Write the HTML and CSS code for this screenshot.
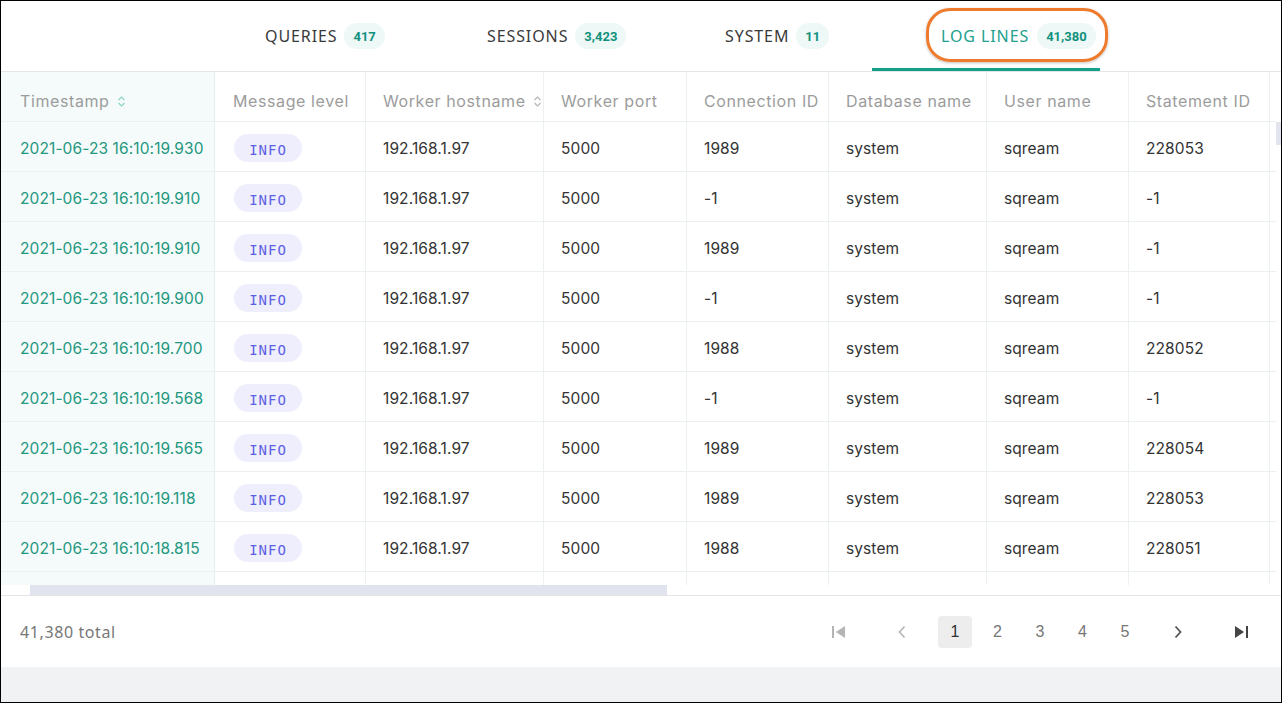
FILE: index.html
```html
<!DOCTYPE html>
<html lang="en">
<head>
<meta charset="utf-8">
<title>Log lines</title>
<link rel="stylesheet" href="styles.css">
</head>
<body>
<div class="frame">
  <nav class="tabs">
    <div class="tab tab-q"><span class="tab-label">QUERIES</span><span class="count">417</span></div>
    <div class="tab tab-s"><span class="tab-label">SESSIONS</span><span class="count">3,423</span></div>
    <div class="tab tab-y"><span class="tab-label">SYSTEM</span><span class="count">11</span></div>
    <div class="tab tab-l active"><span class="tab-label">LOG LINES</span><span class="count">41,380</span><span class="highlight"></span></div>
  </nav>

  <div class="grid-area">
    <div class="table-wrap">
      <table class="log">
        <colgroup>
          <col class="c-ts"><col class="c-lvl"><col class="c-host"><col class="c-port"><col class="c-conn"><col class="c-db"><col class="c-user"><col class="c-stmt"><col class="c-more">
        </colgroup>
        <thead>
          <tr>
            <th class="ts">Timestamp <svg class="sort" width="9" height="13" viewBox="0 0 9 13"><path d="M1.5 5 L4.5 2 L7.5 5 M1.5 8 L4.5 11 L7.5 8" fill="none" stroke="currentColor" stroke-width="1.2"/></svg></th>
            <th>Message level</th>
            <th><span class="nowrap">Worker hostname <svg class="sort grey" width="9" height="13" viewBox="0 0 9 13"><path d="M1.5 5 L4.5 2 L7.5 5 M1.5 8 L4.5 11 L7.5 8" fill="none" stroke="currentColor" stroke-width="1.2"/></svg></span></th>
            <th>Worker port</th>
            <th>Connection ID</th>
            <th>Database name</th>
            <th>User name</th>
            <th>Statement ID</th>
            <th></th>
          </tr>
        </thead>
        <tbody>
          <tr><td class="ts">2021-06-23 16:10:19.930</td><td><span class="lvl">INFO</span></td><td>192.168.1.97</td><td>5000</td><td>1989</td><td>system</td><td>sqream</td><td>228053</td><td></td></tr>
          <tr><td class="ts">2021-06-23 16:10:19.910</td><td><span class="lvl">INFO</span></td><td>192.168.1.97</td><td>5000</td><td>-1</td><td>system</td><td>sqream</td><td>-1</td><td></td></tr>
          <tr><td class="ts">2021-06-23 16:10:19.910</td><td><span class="lvl">INFO</span></td><td>192.168.1.97</td><td>5000</td><td>1989</td><td>system</td><td>sqream</td><td>-1</td><td></td></tr>
          <tr><td class="ts">2021-06-23 16:10:19.900</td><td><span class="lvl">INFO</span></td><td>192.168.1.97</td><td>5000</td><td>-1</td><td>system</td><td>sqream</td><td>-1</td><td></td></tr>
          <tr><td class="ts">2021-06-23 16:10:19.700</td><td><span class="lvl">INFO</span></td><td>192.168.1.97</td><td>5000</td><td>1988</td><td>system</td><td>sqream</td><td>228052</td><td></td></tr>
          <tr><td class="ts">2021-06-23 16:10:19.568</td><td><span class="lvl">INFO</span></td><td>192.168.1.97</td><td>5000</td><td>-1</td><td>system</td><td>sqream</td><td>-1</td><td></td></tr>
          <tr><td class="ts">2021-06-23 16:10:19.565</td><td><span class="lvl">INFO</span></td><td>192.168.1.97</td><td>5000</td><td>1989</td><td>system</td><td>sqream</td><td>228054</td><td></td></tr>
          <tr><td class="ts">2021-06-23 16:10:19.118</td><td><span class="lvl">INFO</span></td><td>192.168.1.97</td><td>5000</td><td>1989</td><td>system</td><td>sqream</td><td>228053</td><td></td></tr>
          <tr><td class="ts">2021-06-23 16:10:18.815</td><td><span class="lvl">INFO</span></td><td>192.168.1.97</td><td>5000</td><td>1988</td><td>system</td><td>sqream</td><td>228051</td><td></td></tr>
          <tr class="partial"><td class="ts"></td><td></td><td></td><td></td><td></td><td></td><td></td><td></td><td></td></tr>
        </tbody>
      </table>
    </div>
    <div class="vscroll"><div class="vthumb"></div></div>
  </div>
  <div class="hscroll"><div class="hthumb"></div></div>

  <footer class="footer">
    <span class="total">41,380 total</span>
    <div class="pager">
      <span class="pg-btn first disabled"><svg width="16" height="14" viewBox="0 0 16 14"><rect x="1" y="1" width="2" height="12" fill="currentColor"/><path d="M14 1 L14 13 L5 7 Z" fill="currentColor"/></svg></span>
      <span class="pg-btn prev disabled"><svg width="10" height="14" viewBox="0 0 10 14"><path d="M7.5 1.5 L2.5 7 L7.5 12.5" fill="none" stroke="currentColor" stroke-width="1.6"/></svg></span>
      <span class="pg-num current">1</span>
      <span class="pg-num">2</span>
      <span class="pg-num">3</span>
      <span class="pg-num">4</span>
      <span class="pg-num">5</span>
      <span class="pg-btn next"><svg width="10" height="14" viewBox="0 0 10 14"><path d="M2.5 1.5 L7.5 7 L2.5 12.5" fill="none" stroke="currentColor" stroke-width="1.8"/></svg></span>
      <span class="pg-btn last"><svg width="16" height="14" viewBox="0 0 16 14"><path d="M2 1 L2 13 L11 7 Z" fill="currentColor"/><rect x="13" y="1" width="2" height="12" fill="currentColor"/></svg></span>
    </div>
  </footer>
  <div class="bottom-band"></div>
</div>
</body>
</html>
```

FILE: styles.css
```css
* { box-sizing: border-box; }
html, body { margin: 0; padding: 0; background: #ffffff; }
body { font-family: "Inter", "Noto Sans", sans-serif; color: #333; }

.frame {
  width: 1282px;
  height: 703px;
  border: 1px solid #000;
  display: flex;
  flex-direction: column;
  overflow: hidden;
  background: #fff;
}

/* Tabs */
.tabs {
  height: 71px;
  flex: none;
  display: flex;
  padding-left: 195px;
  border-bottom: 1px solid #e3e6e6;
}
.tab {
  position: relative;
  display: flex;
  align-items: center;
  padding-left: 69px;
  height: 70px;
  font-family: "Noto Sans", "Open Sans", sans-serif;
  font-size: 16px;
  color: #3a3a3a;
}
.tab-label { letter-spacing: 0.9px; }
.tab-q { width: 222px; }
.tab-s { width: 238px; }
.tab-y { width: 216px; }
.tab-l { width: 228px; }
.tab.active { color: #22a08c; box-shadow: inset 0 -3px 0 #13a08a; }
.count {
  margin-left: 7px;
  height: 26px;
  padding: 0 9px;
  border-radius: 13px;
  background: #eef8f6;
  color: #11917d;
  font-family: "Roboto", "Liberation Sans", sans-serif;
  font-weight: 700;
  font-size: 13px;
  display: inline-flex;
  align-items: center;
}
.tab-l .count { margin-left: 8px; padding: 0 9px; }
.highlight {
  position: absolute;
  left: 54px;
  top: 7px;
  width: 182px;
  height: 54px;
  border: 3px solid #ee7b2d;
  border-radius: 24px;
  box-shadow: 0 1px 3px rgba(0,0,0,0.25);
}

/* Table */
.grid-area {
  display: flex;
  height: 513px;
  flex: none;
}
.table-wrap {
  width: 1275px;
  overflow: hidden;
  flex: none;
}
.vscroll {
  width: 5px;
  padding-top: 50px;
}
.vthumb {
  height: 23px;
  background: #e3e5ee;
}
table.log {
  table-layout: fixed;
  border-collapse: separate;
  border-spacing: 0;
  width: 1389px;
}
col.c-ts { width: 214px; }
col.c-lvl { width: 151px; }
col.c-host { width: 178px; }
col.c-port { width: 143px; }
col.c-conn { width: 142px; }
col.c-db { width: 158px; }
col.c-user { width: 142px; }
col.c-stmt { width: 141px; }
col.c-more { width: 120px; }

th, td {
  border-right: 1px solid #ebf1f0;
  border-bottom: 1px solid #ebf1f0;
  text-align: left;
  white-space: nowrap;
  overflow: hidden;
  padding: 0 0 0 17px;
}
th {
  height: 50px;
  font-weight: 400;
  font-size: 16px;
  letter-spacing: 0.6px;
  color: #9c9c9c;
  padding-top: 8px;
}
th:nth-child(2) { padding-left: 18px; }
td {
  height: 50px;
  font-size: 15.5px;
  letter-spacing: 0.1px;
  color: #333;
  padding-top: 3px;
}
th.ts, td.ts {
  background: #f4fbfa;
  padding-left: 19px;
  border-right-color: #e4eeec;
}
td.ts { color: #23977f; }
.sort { color: #8cd2c6; vertical-align: -1px; margin-left: 2px; }
.sort.grey { color: #b5b5b5; }
.nowrap { white-space: nowrap; }

.lvl {
  display: inline-flex;
  align-items: center;
  justify-content: center;
  width: 68px;
  height: 28px;
  margin-left: 2px;
  padding-top: 4px;
  border-radius: 14px;
  background: #eeeefc;
  color: #5d60e3;
  font-family: "DejaVu Sans Mono", "Liberation Mono", monospace;
  font-size: 14px;
  letter-spacing: 1px;
}
tr.partial td { height: 14px; padding: 0; border-bottom: none; }

/* Horizontal scrollbar */
.hscroll {
  height: 10px;
  flex: none;
  padding-left: 29px;
  border-bottom: 1px solid #e4e4e4;
  box-sizing: content-box;
}
.hthumb {
  width: 637px;
  height: 10px;
  background: #e1e4ee;
}

/* Footer */
.footer {
  height: 71px;
  flex: none;
  display: flex;
  align-items: center;
  justify-content: space-between;
  padding: 0 23px 0 19px;
}
.total {
  font-family: "Noto Sans", "Open Sans", sans-serif;
  font-size: 16px;
  letter-spacing: 0.6px;
  color: #777;
}
.pager {
  display: flex;
  align-items: center;
}
.pg-btn, .pg-num {
  width: 34px;
  height: 32px;
  display: flex;
  align-items: center;
  justify-content: center;
  border-radius: 4px;
  font-family: "Liberation Sans", "Arial", sans-serif;
  font-size: 16px;
  color: #777;
}
.pg-num + .pg-num { margin-left: 8.5px; }
.pg-btn.disabled { color: #b4b4b4; }
.pg-btn.first { margin-right: 29px; }
.pg-btn.prev { margin-right: 19px; }
.pg-btn.next { margin-left: 19px; color: #555; }
.pg-btn.last { margin-left: 29px; color: #444; }
.pg-num.current { background: #ededed; color: #333; }

.bottom-band {
  flex: 1;
  background: #f1f2f4;
}
```
